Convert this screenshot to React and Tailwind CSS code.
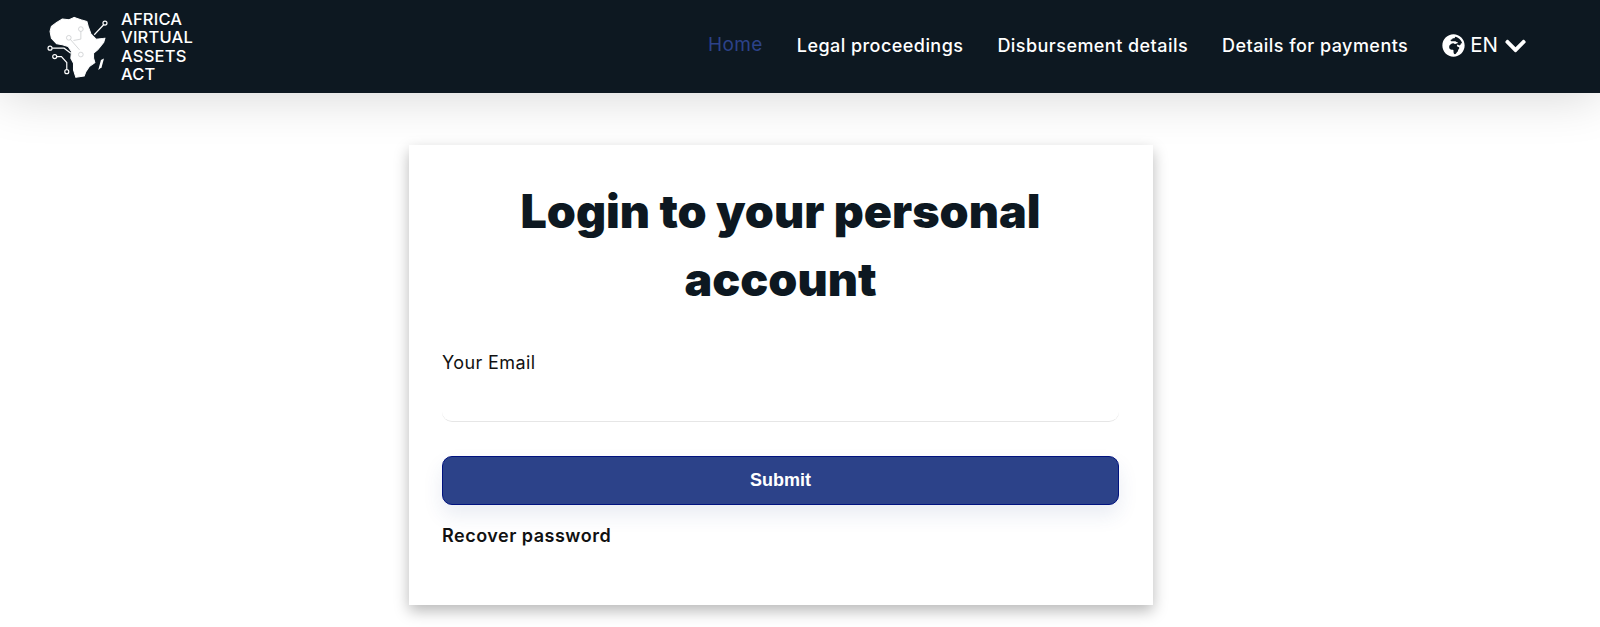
import React from 'react';
import { FaGlobeAfrica, FaChevronDown } from 'react-icons/fa';

const NAV_LINKS = ['Legal proceedings', 'Disbursement details', 'Details for payments'];

function AfricaLogo() {
  return (
    <svg viewBox="40 30 200 200" className="w-[67px] h-[67px] shrink-0" aria-hidden="true">
      <path
        fill="#fff"
        stroke="#fff"
        strokeWidth="3"
        strokeLinejoin="round"
        d="M78 58 L95 48 L115 50 L130 43 L150 50 L168 55 L172 70 L180 92 L195 108 L222 105 L218 118 L200 140 L188 150 L188 165 L192 178 L175 190 L165 205 L160 218 L135 222 L128 200 L128 180 L120 165 L122 145 L112 130 L95 125 L78 122 L62 105 L58 85 L62 70 Z"
      />
      <path fill="#fff" d="M210 170 L219 166 L212 192 L202 200 Z" />
      <g fill="none" stroke="#0d1821" strokeWidth="2.5" opacity="0.2">
        <path d="M118 108 L146 140" />
        <path d="M150 84 L150 108 L128 112" />
        <circle cx="150" cy="78" r="7" />
        <circle cx="114" cy="104" r="7" />
        <circle cx="150" cy="154" r="7" />
      </g>
      <g fill="none" stroke="#fff" strokeWidth="3.5">
        <path d="M190 95 L218 65" />
        <circle cx="222" cy="60" r="6" fill="#0d1821" />
        <path d="M64 135 L100 135 L120 150" />
        <circle cx="58" cy="135" r="6" fill="#0d1821" />
        <path d="M78 160 L92 160 L108 178 L108 198" />
        <circle cx="72" cy="160" r="6" fill="#0d1821" />
        <circle cx="108" cy="205" r="6" fill="#0d1821" />
      </g>
    </svg>
  );
}

export default function App() {
  return (
    <div className="min-h-[627px] bg-white font-['Inter','Noto_Sans',sans-serif]">
      <header className="h-[93px] bg-[#0d1821] flex items-center justify-between pl-[44px] pr-[74px] shadow-[0_4px_50px_rgba(0,0,0,0.16)]">
        <div className="flex items-center gap-[10px]">
          <AfricaLogo />
          <div className="text-white font-medium text-[16.5px] leading-[18.4px] tracking-[0.2px]">
            <div>AFRICA</div>
            <div>VIRTUAL</div>
            <div>ASSETS</div>
            <div>ACT</div>
          </div>
        </div>
        <nav className="flex items-center gap-[34px] mb-[2px] text-white text-[18px] tracking-[0.45px] font-medium">
          <a className="text-[#2c4289] font-normal text-[19px] tracking-[0.4px]">Home</a>
          {NAV_LINKS.map((label) => (
            <a key={label} className="whitespace-nowrap">{label}</a>
          ))}
          <div className="flex items-center gap-[5px] text-[20.5px] tracking-normal font-normal">
            <FaGlobeAfrica className="w-[23px] h-[23px]" />
            <span>EN</span>
            <FaChevronDown className="w-[21px] h-[24px] ml-[2px]" />
          </div>
        </nav>
      </header>

      <main className="w-[1562px] pt-[52px] pb-[22px]">
        <div className="relative w-[744px] h-[460px] mx-auto bg-white pl-[33px] pr-[34px] pt-[32px] shadow-[0_6px_14px_rgba(0,0,0,0.28)]">
          <h1 className="text-center text-[#0d1821] text-[46.6px] leading-[68px] font-black">
            Login to your personal account
          </h1>
          <label className="block mt-[37px] text-[18px] leading-[26px] text-[#111] tracking-[0.4px]">Your Email</label>
          <input
            type="email"
            className="block w-full h-[46px] rounded-[10px] border-b border-[#e6e6e6] bg-white outline-none"
          />
          <button
            type="button"
            className="block w-full h-[49px] mt-[34px] rounded-[10px] border border-[#00127f] bg-[#2c4289] text-white font-['Liberation_Sans',Arial,sans-serif] font-bold text-[18px] shadow-[0_10px_20px_rgba(44,66,137,0.1)]"
          >
            Submit
          </button>
          <a className="block mt-[18px] text-[18px] leading-[26px] tracking-[0.5px] font-semibold text-[#111]">Recover password</a>
        </div>
      </main>
    </div>
  );
}
